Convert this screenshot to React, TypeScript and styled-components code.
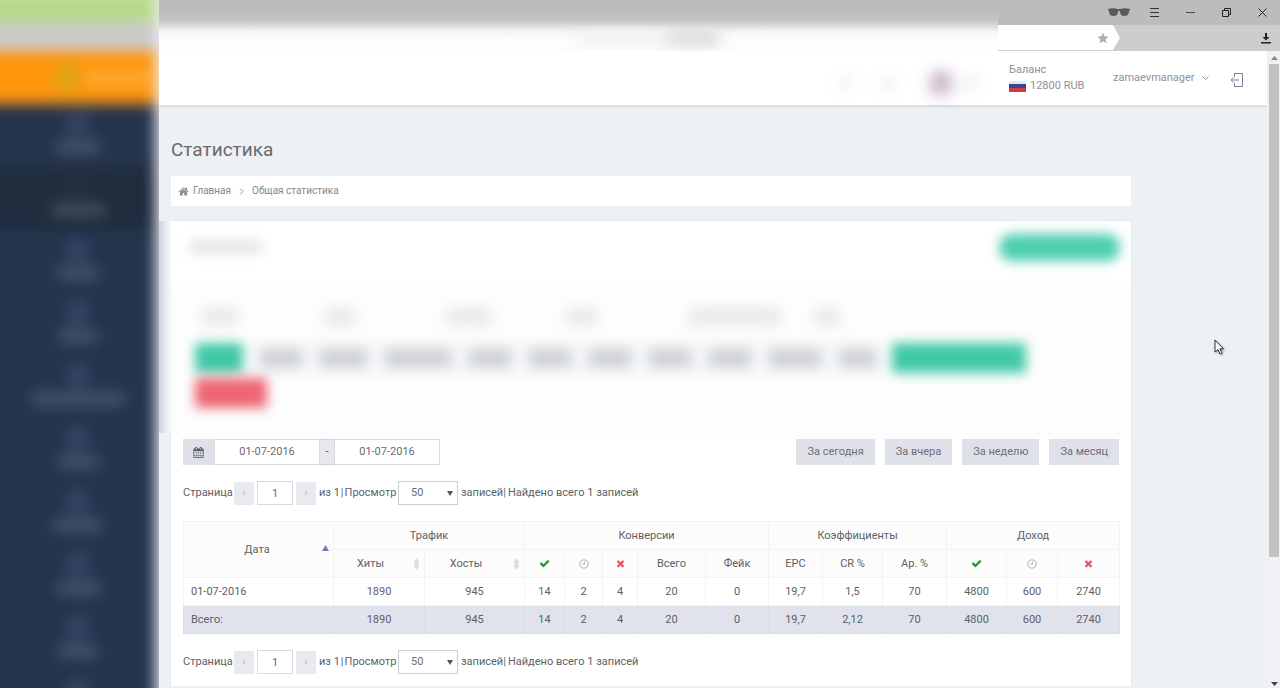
import React from "react";
import styled, { createGlobalStyle } from "styled-components";

const GlobalStyle = createGlobalStyle`
  * { box-sizing: border-box; }
  body {
    margin: 0;
    background: #edf0f4;
    color: #5d5f66;
    font-family: Roboto, "Liberation Sans", sans-serif;
    font-size: 11px;
    line-height: 16px;
  }
  button, input, select { font: inherit; color: inherit; margin: 0; padding: 0; border-radius: 0; }
  button { border: 0; background: none; }
  a { color: inherit; text-decoration: none; }
`;

const Page = styled.div`
  display: flex;
  height: 100vh;
  overflow: hidden;
`;

/* ---------- blurred sidebar ---------- */
const Sidebar = styled.aside`
  flex: 0 0 159px;
  overflow: hidden;
  background: #ececf2;
`;
const SidebarBlur = styled.div`
  height: 110%;
  margin: 0 3px 0 -20px;
  padding-left: 20px;
  filter: blur(7px);
  background: #25344e;
`;
const TabStrip = styled.div`
  height: 32px;
  margin: -10px 0 0 -20px;
  background: #b9da8d;
`;
const ToolStrip = styled.div`
  height: 29px;
  margin-left: -20px;
  background: #cbc9cb;
`;
const Brand = styled.div`
  display: flex;
  align-items: center;
  gap: 6px;
  height: 53px;
  margin-left: -20px;
  padding: 0 0 0 76px;
  background: #ff960c;
`;
const Shape = styled.span<{ $w: number; $h: number; $c: string }>`
  display: block;
  flex: none;
  width: ${(p) => p.$w}px;
  height: ${(p) => p.$h}px;
  border-radius: 5px;
  background: ${(p) => p.$c};
`;
const NavItem = styled.div<{ $active?: boolean }>`
  display: flex;
  flex-direction: column;
  align-items: center;
  gap: 4px;
  height: 63px;
  margin-left: -20px;
  padding: 8px 0 0 20px;
  background: ${(p) => (p.$active ? "#1f2c3e" : "#25344e")};
`;

/* ---------- browser frame ---------- */
const Frame = styled.div`
  display: flex;
  flex: 1;
  min-width: 0;
  flex-direction: column;
`;
const WindowBar = styled.div`
  display: flex;
  flex: none;
  height: 25px;
  background: #bcbcbc;
`;
const WindowFade = styled.div`
  flex: 1;
  background: linear-gradient(#bcbcbc 50%, #c6c6c6 80%, #d8d8d8);
`;
const WindowTools = styled.div`
  display: flex;
  flex: 0 0 282px;
  align-items: center;
  justify-content: flex-end;
  padding-right: 8px;
  gap: 16px;
`;
const IconButton = styled.button`
  display: grid;
  place-items: center;
  width: 20px;
  height: 20px;
`;
const AddressBar = styled.div`
  display: flex;
  flex: none;
  height: 26px;
  background: #cdcdcd;
`;
const AddressFade = styled.div`
  display: flex;
  flex: 1;
  justify-content: center;
  align-items: center;
  padding-left: 136px;
  overflow: hidden;
  background: linear-gradient(#d8d8d8, #f4f4f4 25%, #fdfdfd 50%);
`;
const Soft = styled.div<{ $r: number }>`
  display: flex;
  align-items: center;
  filter: blur(${(p) => p.$r}px);
`;
const AddressTools = styled.div`
  display: flex;
  flex: 0 0 282px;
  align-items: center;
  justify-content: space-between;
  padding-right: 4px;
`;
const AddressEnd = styled.div`
  display: flex;
  align-items: center;
  justify-content: flex-end;
  width: 122px;
  height: 26px;
  padding-right: 11px;
  background: #fff;
  clip-path: polygon(0 0, 115px 0, 122px 13px, 115px 25px, 0 25px);
`;
const Viewport = styled.div`
  display: flex;
  flex: 1;
  min-height: 0;
`;
const Document = styled.div`
  flex: 1;
  min-width: 0;
  overflow: hidden;
`;
const ScrollTrack = styled.div`
  display: flex;
  flex: 0 0 13px;
  flex-direction: column;
  align-items: center;
  justify-content: space-between;
  padding: 5px 0 2px 1px;
  background: #f1f0f2;
`;
const ScrollThumb = styled.div`
  flex: 0 1 493px;
  width: 10px;
  margin: 4px 0 auto;
  background: #c1c1c1;
`;

/* ---------- site header ---------- */
const Header = styled.header`
  display: flex;
  height: 54px;
  background: #fff;
  box-shadow: 0 1px 3px #c9ccd4;
`;
const HeaderBlur = styled.div`
  display: flex;
  flex: 1;
  align-items: center;
  justify-content: flex-end;
  padding: 10px 18px 0 0;
`;
const Account = styled.div`
  display: flex;
  flex: 0 0 269px;
  padding: 11px 0 0 11px;
  color: #8d9199;
`;
const Balance = styled.div`
  flex: 0 0 104px;
`;
const Amount = styled.div`
  display: flex;
  align-items: center;
  gap: 4px;
`;
const UserButton = styled.button`
  display: flex;
  align-items: center;
  gap: 7px;
  width: 114px;
  height: 32px;
`;
const ExitButton = styled(IconButton)`
  height: 36px;
`;

/* ---------- page content ---------- */
const Content = styled.main`
  padding: 30px 136px 0 12px;
`;
const Title = styled.h1`
  margin: 0;
  height: 41px;
  color: #6a6a6c;
  font-size: 19px;
  font-weight: 400;
  line-height: 30px;
`;
const Crumbs = styled.nav`
  display: flex;
  align-items: center;
  gap: 8px;
  height: 30px;
  padding-left: 7px;
  margin-bottom: 15px;
  background: #fff;
  color: #85868a;
  font-size: 10px;
`;
const CrumbLink = styled.a`
  display: flex;
  align-items: center;
  gap: 4px;
`;
const Panel = styled.section`
  padding: 0 12px 12px;
  background: #fff;
  box-shadow: 0 0 2px #e1e4ea;
`;
const Filters = styled.div`
  position: relative;
  height: 218px;
  margin: 0 -12px;
  padding: 12px 11px 0 18px;
  background: linear-gradient(#fff 25%, #fdfdfd 35%);
  &::before {
    content: "";
    position: absolute;
    left: -12px;
    top: 0;
    width: 12px;
    height: 212px;
    background: linear-gradient(90deg, #ced3e0, #eceff5 70%, #f6f8fa);
  }
`;
const FiltersTop = styled(Soft)`
  justify-content: space-between;
  height: 28px;
`;
const RoundButton = styled.button`
  width: 121px;
  height: 27px;
  border-radius: 13px;
  background: #4dceae;
`;
const FilterLabels = styled(Soft)`
  height: 24px;
  margin-top: 44px;
  padding-left: 13px;
`;
const LabelCell = styled.div<{ $w: number }>`
  width: ${(p) => p.$w}px;
`;
const FilterRow = styled(Soft)`
  gap: 4px;
  margin-top: 14px;
  padding-left: 6px;
`;
const FilterButton = styled.button<{ $w: number; $c: string }>`
  display: grid;
  place-items: center;
  width: ${(p) => p.$w}px;
  height: 30px;
  border-radius: 3px;
  background: ${(p) => p.$c};
`;
const DangerRow = styled(FilterRow)`
  margin-top: 5px;
`;

const Toolbar = styled.div`
  display: flex;
  justify-content: space-between;
  height: 26px;
`;
const DateRange = styled.div`
  display: flex;
`;
const DateAddon = styled.button`
  display: grid;
  place-items: center;
  width: 31px;
  background: #dfe1e9;
`;
const DateInput = styled.input`
  width: 106px;
  border: 1px solid #d9dade;
  background: #fff;
  color: #6a6c72;
  text-align: center;
  outline: none;
`;
const DateDash = styled.span`
  width: 14px;
  border: 1px solid #cfd1d7;
  border-width: 1px 0;
  background: #e6e8ee;
  text-align: center;
  line-height: 24px;
`;
const Presets = styled.div`
  display: flex;
  gap: 10px;
`;
const Preset = styled.button`
  padding: 0 11px;
  background: #dfe1e9;
  color: #6c6e75;
`;

const Pager = styled.div`
  display: flex;
  align-items: center;
  height: 24px;
  margin-top: 16px;
`;
const PageArrow = styled.button`
  width: 20px;
  height: 23px;
  background: #e8eaef;
  color: #b9bbc1;
`;
const PageWord = styled.label`
  width: 51px;
`;
const PageInput = styled.input`
  width: 36px;
  height: 24px;
  margin: 0 3px;
  border: 1px solid #d9dade;
  background: #fff;
  color: #6a6c72;
  text-align: center;
`;
const PagerText = styled.div`
  display: flex;
  gap: 1px;
  width: 82px;
  padding-left: 3px;
  white-space: nowrap;
`;
const PagerInfo = styled.div`
  display: flex;
  gap: 2px;
  padding-left: 3px;
`;
const SelectWrap = styled.div`
  position: relative;
  height: 24px;
`;
const PageSelect = styled.select`
  appearance: none;
  width: 60px;
  height: 24px;
  padding-left: 12px;
  border: 1px solid #cdced4;
  background: #fff;
  color: #6a6c72;
`;
const SelectArrow = styled.svg`
  position: absolute;
  right: 5px;
  top: 10px;
  pointer-events: none;
`;

const Table = styled.table`
  width: 100%;
  margin-top: 16px;
  border-collapse: collapse;
  table-layout: fixed;
  text-align: center;
  svg { vertical-align: middle; }
`;
const Th = styled.th`
  height: 28px;
  padding: 0 8px;
  border: 1px solid #f2f3f5;
  background: #fcfcfd;
  font-weight: 400;
`;
const HeadCell = styled.div<{ $pad: number }>`
  display: flex;
  align-items: center;
  margin-right: -4px;
  & > span { flex: 1; padding-right: ${(p) => p.$pad}px; }
`;
const Td = styled.td<{ $total?: boolean }>`
  height: 28px;
  padding: 0;
  border: 1px solid ${(p) => (p.$total ? "#dbdee8" : "#f2f3f5")};
  background: ${(p) => (p.$total ? "#e0e2ec" : "#fff")};
  &:first-child { padding-left: 7px; text-align: left; }
`;
const Pointer = styled.svg`
  position: fixed;
  left: 1214px;
  top: 339px;
  filter: drop-shadow(1px 1px 1px #9a9a9a);
`;

/* ---------- icons ---------- */
type GlyphProps = { d: string; size: number; color: string };
const Glyph = ({ d, size, color }: GlyphProps) => (
  <svg width={size} height={size} viewBox="0 0 1792 1792" fill={color} aria-hidden="true">
    <path d={d} />
  </svg>
);
const CHECK =
  "M1671 566q0 40-28 68l-724 724-136 136q-28 28-68 28t-68-28l-136-136-362-362q-28-28-28-68t28-68l136-136q28-28 68-28t68 28l294 295 656-657q28-28 68-28t68 28l136 136q28 28 28 68z";
const TIMES =
  "M1490 1322q0 40-28 68l-136 136q-28 28-68 28t-68-28l-294-294-294 294q-28 28-68 28t-68-28l-136-136q-28-28-28-68t28-68l294-294-294-294q-28-28-28-68t28-68l136-136q28-28 68-28t68 28l294 294 294-294q28-28 68-28t68 28l136 136q28 28 28 68t-28 68l-294 294 294 294q28 28 28 68z";
const CALENDAR =
  "M192 1664h288v-288h-288v288zm352 0h320v-288h-320v288zm-352-352h288v-320h-288v320zm352 0h320v-320h-320v320zm-352-384h288v-288h-288v288zm736 736h320v-288h-320v288zm-384-736h320v-288h-320v288zm768 736h288v-288h-288v288zm-384-352h320v-320h-320v320zm-352-864v-288q0-13-9.500-22.500t-22.500-9.500h-64q-13 0-22.500 9.500t-9.500 22.500v288q0 13 9.500 22.500t22.500 9.500h64q13 0 22.500-9.500t9.500-22.500zm736 864h288v-320h-288v320zm-384-384h320v-288h-320v288zm384 0h288v-288h-288v288zm32-480v-288q0-13-9.500-22.500t-22.500-9.500h-64q-13 0-22.500 9.500t-9.500 22.500v288q0 13 9.500 22.500t22.500 9.500h64q13 0 22.500-9.500t9.500-22.500zm384-64v1280q0 52-38 90t-90 38h-1408q-52 0-90-38t-38-90v-1280q0-52 38-90t90-38h128v-96q0-66 47-113t113-47h64q66 0 113 47t47 113v96h384v-96q0-66 47-113t113-47h64q66 0 113 47t47 113v96h128q52 0 90 38t38 90z";
const HOME =
  "M1472 992v480q0 26-19 45t-45 19h-384v-384h-256v384h-384q-26 0-45-19t-19-45v-480q0-1 .5-3t.5-3l575-474 575 474q1 2 1 6zm223-69l-62 74q-8 9-21 11h-3q-13 0-21-7l-692-577-692 577q-12 8-24 7-13-2-21-11l-62-74q-8-10-7-23.500t11-21.500l719-599q32-26 76-26t76 26l244 204v-195q0-14 9-23t23-9h192q14 0 23 9t9 23v408l219 182q10 8 11 21.500t-7 23.500z";

const Clock = () => (
  <svg width="10" height="10" viewBox="0 0 10 10" fill="none" stroke="#b3adaf" aria-hidden="true">
    <circle cx="5" cy="5" r="4.200" />
    <path d="M5.300 2.500v2.800h-1.800" />
  </svg>
);
const SortBoth = () => (
  <svg width="7" height="12" viewBox="0 0 7 12" fill="#dcdde0" aria-hidden="true">
    <path d="M3.500 0l3 4h-1v4h1l-3 4-3-4h1v-4h-1z" />
  </svg>
);
const SortUp = () => (
  <svg width="7" height="12" viewBox="0 0 7 12" fill="#7d78b4" aria-hidden="true">
    <path d="M3.500 1L7 7H0z" />
  </svg>
);
const Flag = () => (
  <svg width="17" height="12" viewBox="0 0 17 12" aria-hidden="true">
    <path d="M0 1h17v4H0z" fill="#e8e8ec" />
    <path d="M0 4h17v4H0z" fill="#3346a0" />
    <path d="M0 8h17v4H0z" fill="#d4373f" />
  </svg>
);

const NAV = [45, 55, 42, 40, 95, 42, 50, 45, 40, 40];
const LABELS: [number, number][] = [
  [36, 123], [30, 122], [44, 120], [30, 122], [92, 126], [24, 60],
];
const FILTERS = [56, 61, 80, 56, 56, 56, 56, 56, 66, 51];
const COLS = [150, 91, 100, 40, 38, 35, 68, 63, 54, 60, 64, 60, 51, 62];
const ROW = ["1890", "945", "14", "2", "4", "20", "0", "19,7", "1,5", "70", "4800", "600", "2740"];
const TOTAL = ["1890", "945", "14", "2", "4", "20", "0", "19,7", "2,12", "70", "4800", "600", "2740"];

const StatusHeads = () => (
  <>
    <Th scope="col"><Glyph d={CHECK} size={11} color="#1f9d2b" /></Th>
    <Th scope="col"><Clock /></Th>
    <Th scope="col"><Glyph d={TIMES} size={11} color="#e4576a" /></Th>
  </>
);

const Paging = ({ id }: { id: string }) => (
  <Pager>
    <PageWord htmlFor={`page-${id}`}>Страница</PageWord>
    <PageArrow type="button">‹</PageArrow>
    <PageInput id={`page-${id}`} defaultValue="1" />
    <PageArrow type="button">›</PageArrow>
    <PagerText>
      <span>из 1</span>
      <span>|</span>
      <label htmlFor={`size-${id}`}>Просмотр</label>
    </PagerText>
    <SelectWrap>
      <PageSelect id={`size-${id}`} defaultValue="50">
        <option>50</option>
      </PageSelect>
      <SelectArrow width="6" height="5" viewBox="0 0 6 5" fill="#555" aria-hidden="true">
        <path d="M0 0h6L3 5z" />
      </SelectArrow>
    </SelectWrap>
    <PagerInfo>
      <span>записей|</span>
      <span>Найдено всего 1 записей</span>
    </PagerInfo>
  </Pager>
);

export default function App() {
  return (
    <Page>
      <GlobalStyle />
      <Sidebar aria-hidden="true">
        <SidebarBlur>
          <TabStrip />
          <ToolStrip />
          <Brand>
            <Shape $w={22} $h={24} $c="#d8a614" />
            <Shape $w={68} $h={12} $c="#ffab3c" />
          </Brand>
          {NAV.map((w, i) => (
            <NavItem key={i} $active={i === 1}>
              <Shape $w={20} $h={24} $c={i === 1 ? "#243142" : "#364562"} />
              <Shape $w={w} $h={14} $c={i === 1 ? "#414c59" : "#435169"} />
            </NavItem>
          ))}
        </SidebarBlur>
      </Sidebar>

      <Frame>
        <WindowBar>
          <WindowFade />
          <WindowTools>
            <IconButton type="button" aria-label="Инкогнито">
              <svg width="22" height="9" viewBox="0 0 22 9" fill="#5a5a5a">
                <path d="M0 1q5-1.500 10 0h2q5-1.500 10 0v1l-1 1q0 5-4.500 5T12 3.500q-1-1.500-2 0Q10 8 5.500 8T1 3L0 2z" />
              </svg>
            </IconButton>
            <IconButton type="button" aria-label="Меню">
              <svg width="9" height="9" viewBox="0 0 9 9" stroke="#333">
                <path d="M0 .5h9M0 4.500h9M0 8.500h9" />
              </svg>
            </IconButton>
            <IconButton type="button" aria-label="Свернуть">
              <svg width="9" height="9" viewBox="0 0 9 9" stroke="#444">
                <path d="M0 4.500h9" />
              </svg>
            </IconButton>
            <IconButton type="button" aria-label="Развернуть">
              <svg width="9" height="9" viewBox="0 0 9 9" stroke="#222" fill="none">
                <path d="M.5 2.500h6v6h-6zM2.500 2.500v-2h6v6h-2" />
              </svg>
            </IconButton>
            <IconButton type="button" aria-label="Закрыть">
              <svg width="9" height="9" viewBox="0 0 9 9" stroke="#222">
                <path d="M.5 .5l8 8M8.500 .5l-8 8" />
              </svg>
            </IconButton>
          </WindowTools>
        </WindowBar>
        <AddressBar>
          <AddressFade aria-hidden="true">
            <Soft $r={7}>
              <Shape $w={92} $h={14} $c="#f1f1f1" />
              <Shape $w={54} $h={18} $c="#dddddd" />
            </Soft>
          </AddressFade>
          <AddressTools>
            <AddressEnd>
              <svg width="12" height="12" viewBox="0 0 24 24" fill="#b0b0b0" aria-hidden="true">
                <path d="M12 1l3.300 7.500 8.200.8-6.200 5.400 1.900 8L12 18.500l-7.200 4.200 1.900-8L.5 9.300l8.200-.8z" />
              </svg>
            </AddressEnd>
            <IconButton type="button" aria-label="Загрузки">
              <svg width="10" height="11" viewBox="0 0 10 11" fill="#222">
                <path d="M4 0h2v4h2.500L5 7.500 1.500 4H4zM0 9h10v1.500H0z" />
              </svg>
            </IconButton>
          </AddressTools>
        </AddressBar>

        <Viewport>
          <Document>
            <Header>
              <HeaderBlur aria-hidden="true">
                <Soft $r={7}>
                  <Shape $w={12} $h={18} $c="#eff3f4" />
                  <LabelCell $w={30} />
                  <Shape $w={12} $h={18} $c="#eff3f4" />
                  <LabelCell $w={36} />
                  <Shape $w={22} $h={24} $c="#cdb9cc" />
                  <LabelCell $w={8} />
                  <Shape $w={20} $h={16} $c="#f1f3f5" />
                </Soft>
              </HeaderBlur>
              <Account>
                <Balance>
                  <div>Баланс</div>
                  <Amount>
                    <Flag />
                    12800 RUB
                  </Amount>
                </Balance>
                <UserButton type="button">
                  zamaevmanager
                  <svg width="7" height="5" viewBox="0 0 7 5" fill="none" stroke="#999">
                    <path d="M.5 .5l3 3 3-3" />
                  </svg>
                </UserButton>
                <ExitButton type="button" aria-label="Выход">
                  <svg width="14" height="14" viewBox="0 0 14 14" fill="none" stroke="#7c8296">
                    <path d="M4.500 4V.5h8v13h-8V10M9 7H1M3.500 4.500L1 7l2.500 2.500" />
                  </svg>
                </ExitButton>
              </Account>
            </Header>

            <Content>
              <Title>Статистика</Title>
              <Crumbs>
                <CrumbLink href="#">
                  <Glyph d={HOME} size={11} color="#8c8c8e" />
                  Главная
                </CrumbLink>
                <svg width="5" height="7" viewBox="0 0 5 7" fill="none" stroke="#999" aria-hidden="true">
                  <path d="M1 .5l3 3-3 3" />
                </svg>
                <CrumbLink href="#">Общая статистика</CrumbLink>
              </Crumbs>

              <Panel>
                <Filters aria-hidden="true">
                  <FiltersTop $r={6}>
                    <Shape $w={74} $h={14} $c="#e6e6e6" />
                    <RoundButton type="button" tabIndex={-1} />
                  </FiltersTop>
                  <FilterLabels $r={7}>
                    {LABELS.map(([w, cell], i) => (
                      <LabelCell key={i} $w={cell}>
                        <Shape $w={w} $h={16} $c="#e6e6e6" />
                      </LabelCell>
                    ))}
                  </FilterLabels>
                  <FilterRow $r={6}>
                    <FilterButton type="button" tabIndex={-1} $w={48} $c="#41c8a6" />
                    <LabelCell $w={2} />
                    {FILTERS.map((w, i) => (
                      <FilterButton key={i} type="button" tabIndex={-1} $w={w} $c="#edf0f3">
                        <Shape $w={w - 16} $h={18} $c="#d0d2d6" />
                      </FilterButton>
                    ))}
                    <LabelCell $w={1} />
                    <FilterButton type="button" tabIndex={-1} $w={134} $c="#41c8a6" />
                  </FilterRow>
                  <DangerRow $r={6}>
                    <FilterButton type="button" tabIndex={-1} $w={72} $c="#ed6572" />
                  </DangerRow>
                </Filters>

                <Toolbar>
                  <DateRange>
                    <DateAddon type="button" aria-label="Календарь">
                      <Glyph d={CALENDAR} size={11} color="#55575e" />
                    </DateAddon>
                    <DateInput aria-label="Дата от" defaultValue="01-07-2016" />
                    <DateDash>-</DateDash>
                    <DateInput aria-label="Дата до" defaultValue="01-07-2016" />
                  </DateRange>
                  <Presets>
                    <Preset type="button">За сегодня</Preset>
                    <Preset type="button">За вчера</Preset>
                    <Preset type="button">За неделю</Preset>
                    <Preset type="button">За месяц</Preset>
                  </Presets>
                </Toolbar>

                <Paging id="top" />

                <Table>
                  <colgroup>
                    {COLS.map((w, i) => (
                      <col key={i} width={w} />
                    ))}
                  </colgroup>
                  <thead>
                    <tr>
                      <Th rowSpan={2} scope="col">
                        <HeadCell $pad={0}>
                          <span>Дата</span>
                          <SortUp />
                        </HeadCell>
                      </Th>
                      <Th colSpan={2} scope="colgroup">Трафик</Th>
                      <Th colSpan={5} scope="colgroup">Конверсии</Th>
                      <Th colSpan={3} scope="colgroup">Коэффициенты</Th>
                      <Th colSpan={3} scope="colgroup">Доход</Th>
                    </tr>
                    <tr>
                      <Th scope="col"><HeadCell $pad={14}><span>Хиты</span><SortBoth /></HeadCell></Th>
                      <Th scope="col"><HeadCell $pad={14}><span>Хосты</span><SortBoth /></HeadCell></Th>
                      <StatusHeads />
                      <Th scope="col">Всего</Th>
                      <Th scope="col">Фейк</Th>
                      <Th scope="col">EPC</Th>
                      <Th scope="col">CR %</Th>
                      <Th scope="col">Ap. %</Th>
                      <StatusHeads />
                    </tr>
                  </thead>
                  <tbody>
                    <tr>
                      <Td>01-07-2016</Td>
                      {ROW.map((v, i) => <Td key={i}>{v}</Td>)}
                    </tr>
                    <tr>
                      <Td $total>Всего:</Td>
                      {TOTAL.map((v, i) => <Td key={i} $total>{v}</Td>)}
                    </tr>
                  </tbody>
                </Table>

                <Paging id="bottom" />
              </Panel>
            </Content>
          </Document>
          <ScrollTrack aria-hidden="true">
            <svg width="7" height="4" viewBox="0 0 7 4" fill="#888"><path d="M3.500 0L7 4H0z" /></svg>
            <ScrollThumb />
            <svg width="7" height="4" viewBox="0 0 7 4" fill="#444"><path d="M0 0h7L3.500 4z" /></svg>
          </ScrollTrack>
        </Viewport>
      </Frame>

      <Pointer width="10" height="16" viewBox="0 0 10 16" aria-hidden="true">
        <path d="M1 1v12l3-2.500 2 4.500 2-1-2-4.200h3.500z" fill="#fff" stroke="#333" />
      </Pointer>
    </Page>
  );
}
